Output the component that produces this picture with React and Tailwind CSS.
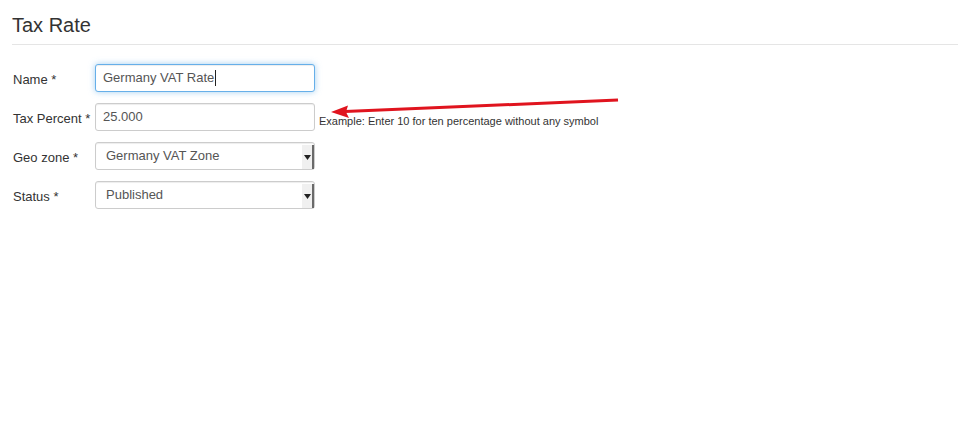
import React from "react";

function SelectBox({ value }) {
  return (
    <div className="relative flex h-[28px] w-[220px] items-center rounded-[3px] border border-[#cccccc] bg-white pl-[10px] text-[13px] text-[#555555] shadow-[inset_0_1px_1px_rgba(0,0,0,0.075)]">
      <span>{value}</span>
      <div className="absolute right-[0px] top-[2px] flex h-[24px] w-[12px] items-center justify-center border-r-2 border-[#6a6a6a] bg-[#f0f0f0]">
        <svg width="7" height="5" viewBox="0 0 7 5">
          <path d="M0 0 H7 L3.5 5 Z" fill="#222" />
        </svg>
      </div>
    </div>
  );
}

function Row({ label, children }) {
  return (
    <div className="flex items-center">
      <label className="mt-[4px] w-[83px] pl-[1px] text-[13px] text-[#333333]">{label}</label>
      {children}
    </div>
  );
}

export default function App() {
  return (
    <div
      className="relative h-[426px] w-[976px] bg-white px-[12px]"
      style={{ fontFamily: '"Liberation Sans", Arial, sans-serif' }}
    >
      <div className="w-[946px] border-b border-[#e5e5e5] pt-[14px] pb-[8px]">
        <h1 className="text-[20px] leading-[22px] text-[#333333]">Tax Rate</h1>
      </div>

      <div className="mt-[19px] flex flex-col gap-[11px]">
        <Row label="Name *">
          <div className="flex h-[28px] w-[220px] items-center rounded-[3px] border border-[#66afe9] bg-white pl-[7px] text-[13px] text-[#555555] shadow-[inset_0_1px_1px_rgba(0,0,0,0.075),0_0_6px_rgba(102,175,233,0.6)]">
            <span>Germany VAT Rate</span>
            <span className="ml-[1px] h-[16px] w-[1px] bg-[#222]" />
          </div>
        </Row>
        <Row label="Tax Percent *">
          <div className="flex items-end">
            <div className="flex h-[28px] w-[220px] items-center rounded-[3px] border border-[#cccccc] bg-white pl-[7px] text-[13px] text-[#555555] shadow-[inset_0_1px_1px_rgba(0,0,0,0.075)]">
              25.000
            </div>
            <span className="mb-[2px] ml-[4px] text-[11px] text-[#333333]">
              Example: Enter 10 for ten percentage without any symbol
            </span>
          </div>
        </Row>
        <Row label="Geo zone *">
          <SelectBox value="Germany VAT Zone" />
        </Row>
        <Row label="Status *">
          <SelectBox value="Published" />
        </Row>
      </div>

      <svg
        className="pointer-events-none absolute left-0 top-0"
        width="976"
        height="426"
        viewBox="0 0 976 426"
      >
        <line x1="618" y1="100" x2="345" y2="111.5" stroke="#e0141e" strokeWidth="3" />
        <path d="M331 112 L348 105.5 L346 112 L349 118 Z" fill="#e0141e" />
      </svg>
    </div>
  );
}
